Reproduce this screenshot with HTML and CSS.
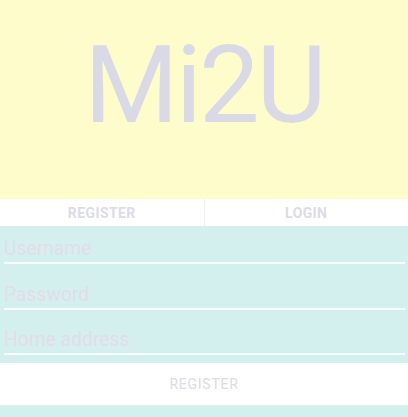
FILE: index.html
```html
<!DOCTYPE html>
<html>
<head>
<meta charset="utf-8">
<link rel="stylesheet" href="styles.css">
</head>
<body>
<div class="app">
  <header class="hero"><h1 class="logo">Mi2U</h1></header>
  <nav class="tabs">
    <div class="tab">REGISTER</div>
    <div class="tab">LOGIN</div>
  </nav>
  <form class="form">
    <div class="field">Username</div>
    <div class="field">Password</div>
    <div class="field">Home address</div>
  </form>
  <div class="submit">REGISTER</div>
  <div class="rest"></div>
</div>
</body>
</html>
```
FILE: styles.css
```css
html, body {
  margin: 0;
  padding: 0;
  background: #d3f0ee;
  font-family: Roboto, "Liberation Sans", sans-serif;
}
.app {
  display: flex;
  flex-direction: column;
  width: 408px;
  height: 417px;
}
.hero {
  height: 199px;
  box-sizing: border-box;
  padding-top: 31px;
  background: #fffccc;
}
.logo {
  margin: 0;
  font-size: 108px;
  line-height: 108px;
  font-weight: 400;
  letter-spacing: -3px;
  text-indent: 0;
  text-align: center;
  color: #dadae6;
}
.tabs {
  display: flex;
  height: 27px;
  background: #ffffff;
}
.tab {
  flex: 1;
  display: flex;
  align-items: center;
  justify-content: center;
  font-size: 14px;
  font-weight: 700;
  letter-spacing: 0.4px;
  color: #dcdbe8;
}
.tab + .tab {
  border-left: 1px solid #efefef;
}
.form {
  margin: 0;
  height: 137px;
  display: flex;
  flex-direction: column;
}
.field {
  margin: 0 3px 7.67px 4px;
  padding: 11px 0 1px;
  line-height: 24px;
  font-size: 19.3px;
  color: #e4dce8;
  border-bottom: 2px solid #fbfdfd;
}
.submit {
  height: 42px;
  display: flex;
  align-items: center;
  justify-content: center;
  background: #ffffff;
  border-bottom: 1px solid #e6ecec;
  font-size: 14px;
  letter-spacing: 0.75px;
  color: #dcdbe8;
}
.rest {
  flex: 1;
}
```
